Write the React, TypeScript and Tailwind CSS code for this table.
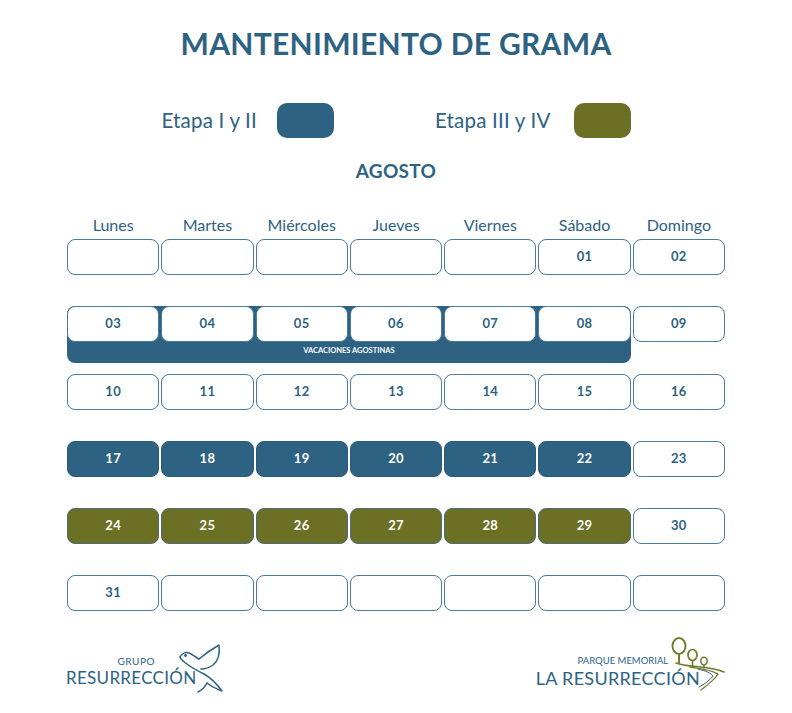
const BLUE = "#2e6283";

type Cell = { n?: string; kind?: "empty" | "plain" | "blue" | "olive" };

const weeks: Cell[][] = [
  [{}, {}, {}, {}, {}, { n: "01" }, { n: "02" }],
  [{ n: "03" }, { n: "04" }, { n: "05" }, { n: "06" }, { n: "07" }, { n: "08" }, { n: "09" }],
  [{ n: "10" }, { n: "11" }, { n: "12" }, { n: "13" }, { n: "14" }, { n: "15" }, { n: "16" }],
  [
    { n: "17", kind: "blue" },
    { n: "18", kind: "blue" },
    { n: "19", kind: "blue" },
    { n: "20", kind: "blue" },
    { n: "21", kind: "blue" },
    { n: "22", kind: "blue" },
    { n: "23" },
  ],
  [
    { n: "24", kind: "olive" },
    { n: "25", kind: "olive" },
    { n: "26", kind: "olive" },
    { n: "27", kind: "olive" },
    { n: "28", kind: "olive" },
    { n: "29", kind: "olive" },
    { n: "30" },
  ],
  [{ n: "31" }, {}, {}, {}, {}, {}, {}],
];

const days = ["Lunes", "Martes", "Miércoles", "Jueves", "Viernes", "Sábado", "Domingo"];

function DayCell({ cell }: { cell: Cell }) {
  const kind = cell.kind ?? "plain";
  const base =
    "h-[36px] rounded-[8px] flex items-center justify-center text-[13px] font-bold tracking-wide";
  if (kind === "blue")
    return <div className={`${base} bg-[#2e6283] border border-[#2a5a7a] text-white`}>{cell.n}</div>;
  if (kind === "olive")
    return <div className={`${base} bg-[#6b7025] border border-[#4d6b80] text-white`}>{cell.n}</div>;
  return (
    <div className={`${base} bg-white border border-[#4a7b9a] text-[#2e6283]`}>{cell.n}</div>
  );
}

// paloma del logo del grupo
function Dove() {
  return (
    <svg width="48" height="52" viewBox="0 0 48 52" fill="none" stroke={BLUE} strokeWidth="1.5" strokeLinecap="round" strokeLinejoin="round">
      <path d="M2 14 C4 10 8 9 11 10 C14 11 17 14 21 16" />
      <path d="M21 16 C27 11 34 6 41 2 C42 10 40 18 35 22 C31 25 27 26 23 26" />
      <path d="M2 14 C3 17 6 19 9 21 C14 25 20 28 26 31 C33 35 39 41 44 48 C39 46 34 44 29 40" />
      <path d="M29 40 C27 44 24 47 20 49" />
      <circle cx="7.5" cy="12.5" r="0.7" fill={BLUE} />
    </svg>
  );
}

// arboles del logo del parque
function Trees() {
  const G = "#6e7d2c";
  return (
    <svg width="58" height="58" viewBox="0 0 58 58" fill="none" strokeLinecap="round">
      <ellipse cx="11" cy="11" rx="6.5" ry="8" stroke={G} strokeWidth="1.9" />
      <path d="M11 19 L11 28" stroke={G} strokeWidth="2" />
      <ellipse cx="24.5" cy="20" rx="4.5" ry="5.5" stroke={G} strokeWidth="1.7" />
      <path d="M24.5 25.5 L24.5 31" stroke={G} strokeWidth="1.6" />
      <ellipse cx="36" cy="26" rx="3.2" ry="3.8" stroke={G} strokeWidth="1.5" />
      <path d="M36 29.8 L36 33" stroke={G} strokeWidth="1.4" />
      <path d="M8 28 C20 33 40 30 56 37" stroke={G} strokeWidth="1.6" />
      <path d="M22 32 C34 34 44 35 50 39 C47 44 41 49 33 55" stroke={G} strokeWidth="1.3" />
      <path d="M30 34 C38 36 43 38 45 41 C42 45 37 49 31 52" stroke={BLUE} strokeWidth="1" />
    </svg>
  );
}

export default function App() {
  return (
    <div
      className="w-[792px] h-[713px] bg-white text-[#2e6283] flex flex-col items-center"
      style={{ fontFamily: "Lato, 'Open Sans', sans-serif" }}
    >
      <h1 className="mt-[24px] text-[30px] leading-[38px] font-bold tracking-[0.3px]">
        MANTENIMIENTO DE GRAMA
      </h1>

      <div className="mt-[41px] flex items-center">
        <span className="text-[20.5px] font-normal tracking-[0.2px]">Etapa I y II</span>
        <div className="ml-[20px] w-[57px] h-[35px] rounded-[10px] bg-[#2e6283]" />
        <span className="ml-[101px] text-[20.5px] font-normal tracking-[0.2px]">Etapa III y IV</span>
        <div className="ml-[23px] w-[57px] h-[35px] rounded-[10px] bg-[#6b7025]" />
      </div>

      <div className="mt-[19px] text-[19px] font-bold tracking-[0.3px]">AGOSTO</div>

      <div className="mt-[29px] w-[658px] flex flex-col">
        <div className="grid grid-cols-7 gap-x-[2px] mb-[4px]">
          {days.map((d) => (
            <div key={d} className="text-center text-[16px] leading-[20px]">
              {d}
            </div>
          ))}
        </div>

        {weeks.map((week, wi) => {
          if (wi === 1) {
            return (
              <div key={wi} className="grid grid-cols-7 gap-x-[2px] mt-[31px] items-start">
                <div className="col-span-6 bg-[#2e6283] rounded-[8px] pb-[4px]">
                  <div className="grid grid-cols-6 gap-x-[2px]">
                    {week.slice(0, 6).map((c, i) => (
                      <DayCell key={i} cell={c} />
                    ))}
                  </div>
                  <div className="text-center text-white text-[7.5px] font-bold leading-[17px]">
                    VACACIONES AGOSTINAS
                  </div>
                </div>
                <DayCell cell={week[6]} />
              </div>
            );
          }
          return (
            <div key={wi} className={`grid grid-cols-7 gap-x-[2px] ${wi === 2 ? "mt-[11px]" : wi === 0 ? "" : "mt-[31px]"}`}>
              {week.map((c, i) => (
                <DayCell key={i} cell={c} />
              ))}
            </div>
          );
        })}
      </div>

      <div className="mt-[24px] w-[660px] flex justify-between items-end">
        <div className="flex items-end">
          <div className="flex flex-col items-center mb-[6px]">
            <span className="text-[10px] leading-[12px] tracking-[0.5px] ml-[10px]">GRUPO</span>
            <span className="text-[17px] leading-[22px] tracking-[0.3px]">RESURRECCIÓN</span>
          </div>
          <div className="-ml-[18px]">
            <Dove />
          </div>
        </div>
        <div className="flex items-end">
          <div className="flex flex-col items-center mb-[6px]">
            <span className="text-[9.5px] leading-[12px] ml-[10px]">PARQUE MEMORIAL</span>
            <span className="text-[18px] leading-[22px] tracking-[0.3px]">LA RESURRECCIÓN</span>
          </div>
          <div className="-ml-[32px] mb-[2px]">
            <Trees />
          </div>
        </div>
      </div>
    </div>
  );
}
